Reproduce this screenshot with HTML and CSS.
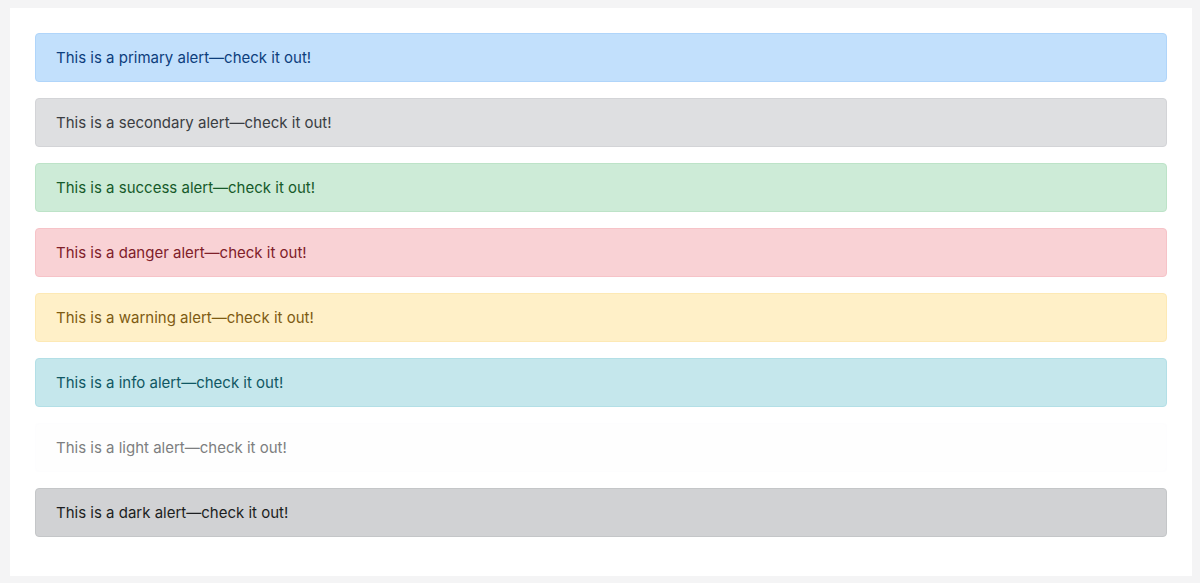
FILE: index.html
```html
<!DOCTYPE html>
<html lang="en">
<head>
<meta charset="utf-8">
<title>Alerts</title>
<link rel="stylesheet" href="styles.css">
</head>
<body>
<div class="panel">
  <div class="alert alert-primary">This is a primary alert—check it out!</div>
  <div class="alert alert-secondary">This is a secondary alert—check it out!</div>
  <div class="alert alert-success">This is a success alert—check it out!</div>
  <div class="alert alert-danger">This is a danger alert—check it out!</div>
  <div class="alert alert-warning">This is a warning alert—check it out!</div>
  <div class="alert alert-info">This is a info alert—check it out!</div>
  <div class="alert alert-light">This is a light alert—check it out!</div>
  <div class="alert alert-dark">This is a dark alert—check it out!</div>
</div>
</body>
</html>
```

FILE: styles.css
```css
html, body {
  margin: 0;
  padding: 0;
}
body {
  background: #f4f4f5;
  font-family: Inter, "Noto Sans", "Liberation Sans", sans-serif;
  font-size: 15px;
  height: 583px;
  overflow: hidden;
}
.panel {
  background: #ffffff;
  margin: 8px 8px 0 10px;
  padding: 25px 25px 24px 25px;
  height: 519px;
}
.alert {
  padding: 12px 20px;
  line-height: 23px;
  border: 1px solid transparent;
  border-radius: 4px;
  margin-bottom: 16px;
}
.alert-primary { background: #c2e0fc; border-color: #b0d5fa; color: #0d3e7c; }
.alert-secondary { background: #dedfe1; border-color: #d3d4d7; color: #3a3d42; }
.alert-success { background: #cdebd7; border-color: #bde3c8; color: #165a2a; }
.alert-danger { background: #f9d2d5; border-color: #f6c3c8; color: #7f2029; }
.alert-warning { background: #fff0c8; border-color: #fde9b5; color: #7e5b12; }
.alert-info { background: #c5e7ec; border-color: #b3dfe6; color: #105763; }
.alert-light { background: #fefefe; border-color: #fdfdfe; color: #7d7e80; }
.alert-dark { background: #d1d2d4; border-color: #c4c6c8; color: #1c1e21; }
```
